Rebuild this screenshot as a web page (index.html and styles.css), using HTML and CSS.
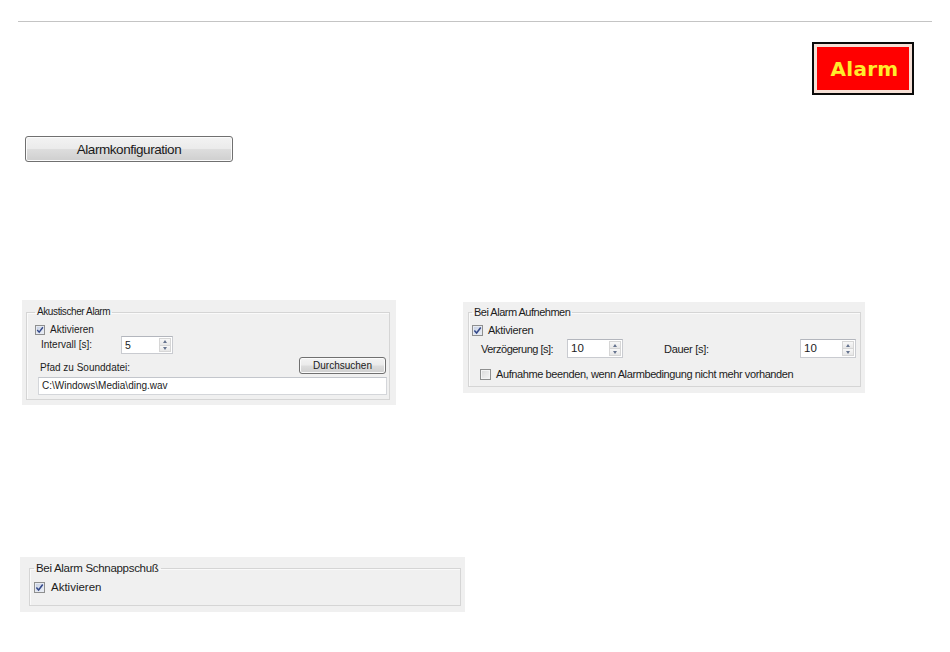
FILE: index.html
```html
<!DOCTYPE html>
<html lang="de">
<head>
<meta charset="utf-8">
<title>Alarm</title>
<link rel="stylesheet" href="styles.css">
</head>
<body>
<div class="page">
  <div class="rule"></div>
  <div class="badge-row"><div class="alarm-badge">Alarm</div></div>
  <button class="cfg-btn" type="button">Alarmkonfiguration</button>

  <div class="panels-row">
    <div class="panel panel-sound">
      <fieldset class="group">
        <legend>Akustischer Alarm</legend>
        <div class="check-row">
          <span class="cb checked"><svg viewBox="0 0 10 10" width="8" height="8"><path d="M1.5 5 L4 7.8 L8.6 1.6" fill="none" stroke="#34498a" stroke-width="1.7"/></svg></span>
          <span>Aktivieren</span>
        </div>
        <div class="field-row">
          <span class="lbl interval-lbl">Intervall [s]:</span>
          <div class="spin spin-interval"><span class="spin-val">5</span><span class="spin-btns"><span class="arr up"></span><span class="arr down"></span></span></div>
        </div>
        <div class="path-row">
          <span class="lbl path-lbl">Pfad zu Sounddatei:</span>
          <button class="win-btn" type="button">Durchsuchen</button>
        </div>
        <div class="textbox">C:\Windows\Media\ding.wav</div>
      </fieldset>
    </div>

    <div class="panel panel-record">
      <fieldset class="group">
        <legend>Bei Alarm Aufnehmen</legend>
        <div class="check-row">
          <span class="cb checked"><svg viewBox="0 0 10 10" width="9" height="9"><path d="M1.5 5 L4 7.8 L8.6 1.6" fill="none" stroke="#34498a" stroke-width="1.7"/></svg></span>
          <span>Aktivieren</span>
        </div>
        <div class="field-row record-row">
          <span class="lbl delay-lbl">Verzögerung [s]:</span>
          <div class="spin spin-delay"><span class="spin-val">10</span><span class="spin-btns"><span class="arr up"></span><span class="arr down"></span></span></div>
          <span class="lbl duration-lbl">Dauer [s]:</span>
          <div class="spin spin-duration"><span class="spin-val">10</span><span class="spin-btns"><span class="arr up"></span><span class="arr down"></span></span></div>
        </div>
        <div class="check-row stop-row">
          <span class="cb"></span>
          <span>Aufnahme beenden, wenn Alarmbedingung nicht mehr vorhanden</span>
        </div>
      </fieldset>
    </div>
  </div>

  <div class="panel panel-snap">
    <fieldset class="group">
      <legend>Bei Alarm Schnappschuß</legend>
      <div class="check-row">
        <span class="cb checked"><svg viewBox="0 0 10 10" width="9" height="9"><path d="M1.5 5 L4 7.8 L8.6 1.6" fill="none" stroke="#34498a" stroke-width="1.7"/></svg></span>
        <span>Aktivieren</span>
      </div>
    </fieldset>
  </div>
</div>
</body>
</html>
```

FILE: styles.css
```css
* { box-sizing: border-box; }
html, body { margin: 0; padding: 0; background: #ffffff; }
body {
  font-family: "Liberation Sans", Arial, sans-serif;
  color: #1c1c1c;
}

.page {
  width: 914px;
  margin-left: 18px;
  padding-top: 21px;
}

.rule {
  height: 1px;
  background: #c4c4c4;
}

.badge-row {
  display: flex;
  justify-content: flex-end;
  margin-top: 20px;
  padding-right: 18px;
}

.alarm-badge {
  width: 102px;
  height: 53px;
  border: 2px solid #0a0a0a;
  background: #ff0000;
  box-shadow: inset 0 0 0 3px #f6e0d6;
  display: flex;
  align-items: center;
  justify-content: center;
  font-family: "DejaVu Sans", sans-serif;
  font-weight: bold;
  font-size: 20px;
  letter-spacing: 0.3px;
  color: #ffec2c;
  padding-left: 3px;
}

.cfg-btn {
  display: block;
  margin: 41px 0 0 7px;
  width: 208px;
  height: 26px;
  padding: 0;
  border: 1px solid #707070;
  border-radius: 3px;
  background: linear-gradient(#f3f3f3 0%, #ebebeb 48%, #dddddd 52%, #cfcfcf 100%);
  box-shadow: inset 0 0 0 1px #fbfbfb;
  font-family: "Liberation Sans", Arial, sans-serif;
  font-size: 13.5px;
  letter-spacing: -0.45px;
  color: #1a1a1a;
}

.panels-row {
  display: flex;
  align-items: flex-start;
  margin-top: 138px;
}

.panel {
  background: #f0f0f0;
}

.group {
  margin: 0;
  min-width: 0;
  border: 1px solid #d5d5d5;
  box-shadow: inset 1px 1px 0 #fafafa;
}

.group legend {
  padding: 0 2px;
  margin: 0;
}

.check-row {
  display: flex;
  align-items: center;
}

.cb {
  flex: none;
  display: flex;
  align-items: center;
  justify-content: center;
  border: 1px solid #8e8f8f;
  background: linear-gradient(135deg, #d9d9d9 0%, #f6f6f6 100%);
  box-shadow: inset 0 0 0 1px #f4f4f4;
}
.cb.checked {
  background: linear-gradient(135deg, #c5cfe2 0%, #eef1f7 100%);
  box-shadow: inset 0 0 0 1px #e6eaf2;
}

.field-row, .path-row {
  display: flex;
}

.lbl { flex: none; }

.spin {
  flex: none;
  display: flex;
  background: #ffffff;
  border: 1px solid #c9cbd0;
  border-top-color: #b3b6bd;
}
.spin-val {
  flex: 1;
  padding-left: 3px;
}
.spin-btns {
  flex: none;
  width: 12px;
  display: flex;
  flex-direction: column;
  margin: 1px 1px 1px 0;
}
.arr {
  flex: 1;
  display: flex;
  align-items: center;
  justify-content: center;
  border: 1px solid #d6d6d6;
  background: linear-gradient(#f8f8f8, #e7e7e7);
}
.arr.down { border-top: none; }
.arr::before {
  content: "";
  width: 0;
  height: 0;
  border-left: 2.5px solid transparent;
  border-right: 2.5px solid transparent;
}
.arr.up::before { border-bottom: 3px solid #66748f; }
.arr.down::before { border-top: 3px solid #66748f; }

.win-btn {
  flex: none;
  padding: 0;
  border: 1px solid #707070;
  border-radius: 3px;
  background: linear-gradient(#f3f3f3 0%, #ebebeb 48%, #dddddd 52%, #cfcfcf 100%);
  box-shadow: inset 0 0 0 1px #fbfbfb;
  font-family: "Liberation Sans", Arial, sans-serif;
  color: #1a1a1a;
}

.textbox {
  background: #ffffff;
  border: 1px solid #d4d6da;
  border-top-color: #c3c6cc;
}

/* ---------- Panel 1: Akustischer Alarm ---------- */
.panel-sound {
  width: 374px;
  margin-left: 4px;
  padding: 6px 6px 5px 4px;
  font-size: 10px;
}
.panel-sound .group {
  padding: 0 2px 4px 8px;
}
.panel-sound legend {
  font-size: 10px;
  line-height: 12px;
  letter-spacing: -0.4px;
}
.panel-sound .check-row {
  margin-top: 6px;
  height: 11px;
  line-height: 11px;
}
.panel-sound .cb {
  width: 10px;
  height: 10px;
  margin-right: 5px;
}
.panel-sound .field-row {
  margin-top: 1px;
  align-items: center;
}
.interval-lbl {
  width: 80px;
  margin-left: 6px;
  line-height: 12px;
}
.spin-interval {
  width: 52px;
  height: 18px;
  line-height: 16px;
  font-size: 10.5px;
}
.panel-sound .path-row {
  margin-top: 3px;
  justify-content: space-between;
  align-items: flex-end;
}
.path-lbl {
  margin-left: 5px;
  line-height: 12px;
}
.panel-sound .win-btn {
  width: 87px;
  height: 17px;
  margin-right: 1px;
  font-size: 10px;
}
.panel-sound .textbox {
  margin: 3px 0 0 3px;
  height: 18px;
  padding-left: 3px;
  line-height: 16px;
  font-size: 10px;
}

/* ---------- Panel 2: Bei Alarm Aufnehmen ---------- */
.panel-record {
  width: 402px;
  margin-left: 67px;
  margin-top: 2px;
  padding: 4px 4px 6px 5px;
  font-size: 11px;
  letter-spacing: -0.3px;
}
.panel-record .group {
  padding: 0 4px 6px 3px;
}
.panel-record legend {
  line-height: 13px;
  letter-spacing: -0.5px;
}
.panel-record .check-row {
  margin-top: 6px;
  height: 11px;
  line-height: 11px;
}
.panel-record .cb {
  width: 11px;
  height: 11px;
  margin-right: 5px;
}
.record-row {
  margin-top: 3px;
  align-items: center;
}
.delay-lbl {
  width: 86px;
  margin-left: 9px;
  letter-spacing: -0.5px;
}
.duration-lbl {
  margin-left: 41px;
}
.spin-delay,
.spin-duration {
  width: 56px;
  height: 19px;
  line-height: 17px;
  font-size: 11.5px;
  letter-spacing: 0;
}
.spin-duration { margin-left: auto; }
.panel-record .stop-row {
  margin-top: 11px;
  padding-left: 8px;
  letter-spacing: -0.4px;
}

/* ---------- Panel 3: Bei Alarm Schnappschuß ---------- */
.panel-snap {
  width: 445px;
  margin-left: 2px;
  margin-top: 152px;
  padding: 4px 4px 6px 9px;
  font-size: 11.5px;
}
.panel-snap .group {
  padding: 0 4px 12px 4px;
}
.panel-snap legend {
  line-height: 14px;
  letter-spacing: -0.3px;
}
.panel-snap .check-row {
  margin-top: 6px;
  height: 12px;
  line-height: 12px;
}
.panel-snap .cb {
  width: 11px;
  height: 11px;
  margin-right: 6px;
}
```
